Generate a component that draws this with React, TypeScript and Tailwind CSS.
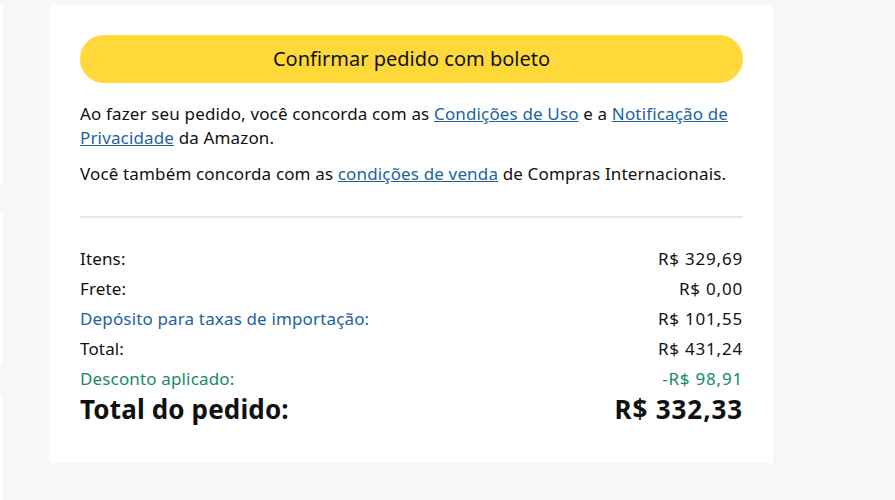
export default function App() {
  const rows = [
    { label: 'Itens:', value: 'R$ 329,69', tone: 'text-[#0f1111]' },
    { label: 'Frete:', value: 'R$ 0,00', tone: 'text-[#0f1111]' },
    { label: 'Depósito para taxas de importação:', value: 'R$ 101,55', tone: 'text-[#2162a1]', valueTone: 'text-[#0f1111]' },
    { label: 'Total:', value: 'R$ 431,24', tone: 'text-[#0f1111]' },
    { label: 'Desconto aplicado:', value: '-R$ 98,91', tone: 'text-[#178a5f]' },
  ]

  return (
    <div
      className="flex h-[500px] w-[895px] bg-[#f7f7f7] text-[#0f1111]"
      style={{ fontFamily: '"Noto Sans", "Open Sans", sans-serif' }}
    >
      {/* bordas do painel vizinho */}
      <div className="flex w-[3px] flex-col pt-[5px]">
        <div className="h-[180px] bg-white" />
        <div className="mt-[28px] h-[152px] bg-white" />
        <div className="mt-[30px] flex-1 bg-white" />
      </div>

      <div className="ml-[47px] mt-[5px] h-[458px] w-[723px] bg-white px-[30px] pt-[30px]">
        <button
          type="button"
          className="flex h-[48px] w-full items-center justify-center rounded-full bg-[#ffd93a] text-[20px] text-[#0f1111]"
        >
          Confirmar pedido com boleto
        </button>

        <p className="mt-[19px] text-[17px] leading-[24px] tracking-[0.15px]">
          Ao fazer seu pedido, você concorda com as{' '}
          <a className="text-[#2162a1] underline">Condições de Uso</a> e a{' '}
          <a className="text-[#2162a1] underline">Notificação de Privacidade</a> da Amazon.
        </p>
        <p className="mt-[12px] text-[17px] leading-[24px] tracking-[0.15px]">
          Você também concorda com as{' '}
          <a className="text-[#2162a1] underline">condições de venda</a> de Compras Internacionais.
        </p>

        <div className="mt-[30px] h-[2px] bg-[#e6e8e8]" />

        <div className="mt-[26px]">
          {rows.map((r) => (
            <div key={r.label} className="flex h-[30px] items-center justify-between text-[17px] tracking-[0.15px]">
              <span className={r.tone}>{r.label}</span>
              <span className={`${r.valueTone ?? r.tone} tracking-[0.8px]`}>{r.value}</span>
            </div>
          ))}
          <div className="flex h-[30px] items-center justify-between text-[26px] font-bold">
            <span className="tracking-[0.15px]">Total do pedido:</span>
            <span className="tracking-[0.9px]">R$ 332,33</span>
          </div>
        </div>
      </div>
    </div>
  )
}
